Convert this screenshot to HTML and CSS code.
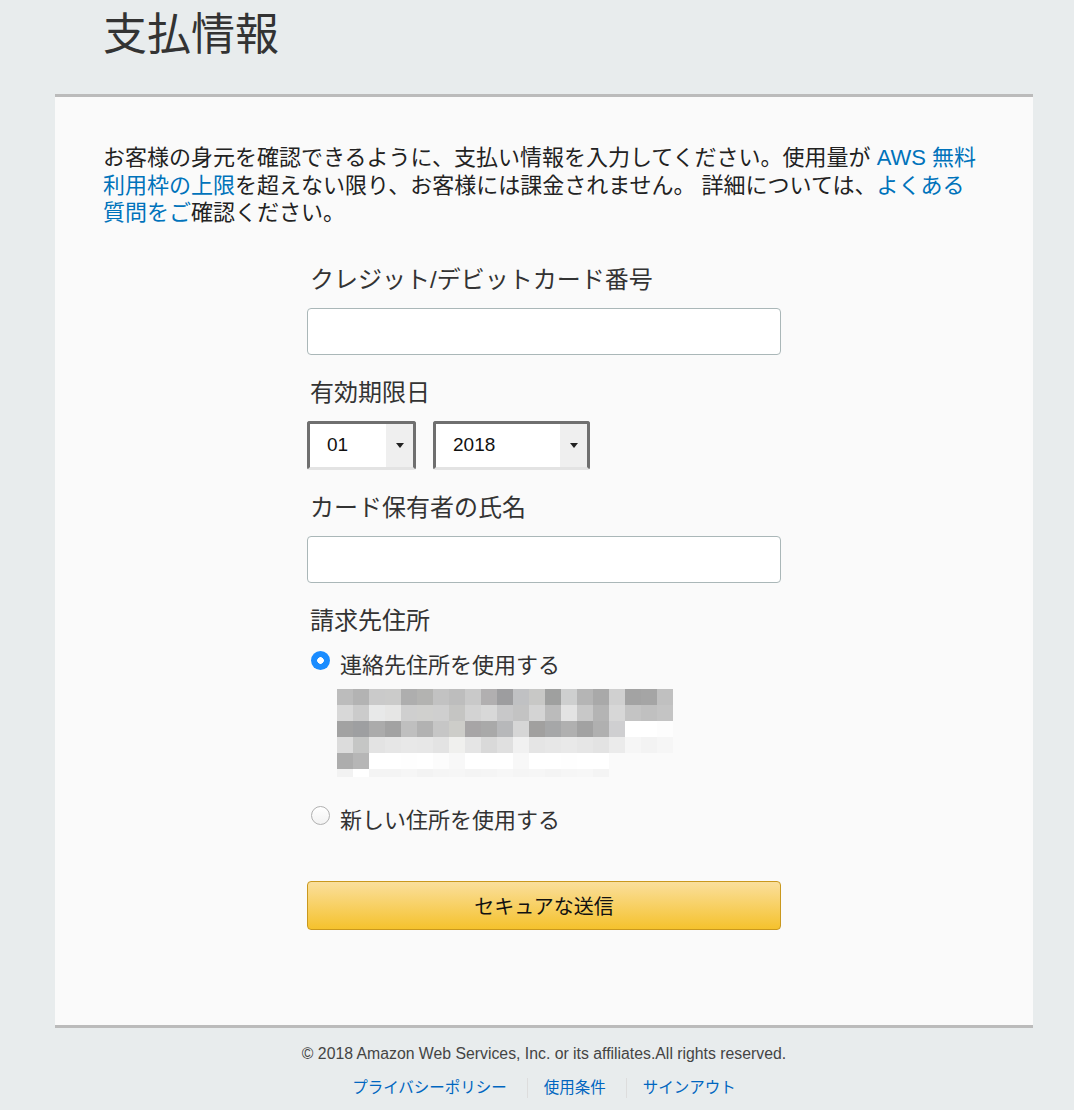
FILE: index.html
```html
<!DOCTYPE html>
<html lang="ja">
<head>
<meta charset="utf-8">
<title>支払情報</title>
<link rel="stylesheet" href="styles.css">
</head>
<body>
<div class="page">
  <header class="head">
    <h1 class="title">支払情報</h1>
  </header>
  <main class="card">
    <p class="intro"><span>お客様の身元を確認できるように、支払い情報を入力してください。使用量が </span><a href="#">AWS 無料</a><a href="#">利用枠の上限</a><span>を超えない限り、お客様には課金されません。 詳細については、</span><a href="#">よくある</a><a href="#">質問をご</a><span>確認ください。</span></p>
    <form class="form">
      <div class="field">
        <label class="label">クレジット/デビットカード番号</label>
        <div class="input"></div>
      </div>
      <div class="field">
        <label class="label">有効期限日</label>
        <div class="selects">
          <div class="select sel-month"><span class="sel-value">01</span><span class="sel-arrow"><span class="tri"></span></span></div>
          <div class="select sel-year"><span class="sel-value">2018</span><span class="sel-arrow"><span class="tri"></span></span></div>
        </div>
      </div>
      <div class="field">
        <label class="label">カード保有者の氏名</label>
        <div class="input"></div>
      </div>
      <div class="field">
        <label class="label">請求先住所</label>
        <div class="radio-row"><span class="radio checked"></span><span class="radio-text">連絡先住所を使用する</span></div>
        <div class="pixels">
          <div class="prow"><span style="background:#bcbcbc"></span><span style="background:#b3b3b3"></span><span style="background:#cacaca"></span><span style="background:#cbcbca"></span><span style="background:#aeaeae"></span><span style="background:#b3b3b1"></span><span style="background:#c2c2c2"></span><span style="background:#bdbdbd"></span><span style="background:#c9c9c9"></span><span style="background:#b1afb0"></span><span style="background:#9d9d9f"></span><span style="background:#c0c1c3"></span><span style="background:#c8c8c6"></span><span style="background:#9fa09f"></span><span style="background:#cecfcf"></span><span style="background:#b5b5b5"></span><span style="background:#a9a9a9"></span><span style="background:#d0d0d0"></span><span style="background:#a3a3a3"></span><span style="background:#a5a5a5"></span><span style="background:#c0c0c0"></span></div>
          <div class="prow"><span style="background:#d8d8d8"></span><span style="background:#cbcbcb"></span><span style="background:#e8e9e9"></span><span style="background:#e6e6e5"></span><span style="background:#cfcfcf"></span><span style="background:#d0d0ce"></span><span style="background:#cfcfcf"></span><span style="background:#c5c5c3"></span><span style="background:#d3d3d3"></span><span style="background:#d8d8d8"></span><span style="background:#c8c8c9"></span><span style="background:#c3c3c3"></span><span style="background:#d4d4d4"></span><span style="background:#bbbbbb"></span><span style="background:#e3e3e3"></span><span style="background:#c8c8c8"></span><span style="background:#b4b4b4"></span><span style="background:#d7d7d7"></span><span style="background:#c4c4c4"></span><span style="background:#c0c0c0"></span><span style="background:#c4c4c4"></span></div>
          <div class="prow"><span style="background:#a2a2a2"></span><span style="background:#9e9fa1"></span><span style="background:#ababab"></span><span style="background:#a2a2a2"></span><span style="background:#bfbfbf"></span><span style="background:#b2b2b2"></span><span style="background:#c6c6c6"></span><span style="background:#cdcdc9"></span><span style="background:#a7a5a6"></span><span style="background:#a9a9a9"></span><span style="background:#b7b8ba"></span><span style="background:#d6d6d6"></span><span style="background:#a1a09f"></span><span style="background:#a6a7a8"></span><span style="background:#b0b0b0"></span><span style="background:#a2a2a2"></span><span style="background:#b0b0b0"></span><span style="background:#cfcfd1"></span><span style="background:#ffffff"></span><span style="background:#ffffff"></span><span style="background:#fdfdfd"></span></div>
          <div class="prow"><span style="background:#dcdcdc"></span><span style="background:#c5c6c5"></span><span style="background:#e3e3e3"></span><span style="background:#e6e6e6"></span><span style="background:#e8e8e8"></span><span style="background:#e7e7e7"></span><span style="background:#e3e3e3"></span><span style="background:#f0f0ee"></span><span style="background:#e5e5e5"></span><span style="background:#d9d9d9"></span><span style="background:#e0e0e0"></span><span style="background:#f1f1f1"></span><span style="background:#e5e5e5"></span><span style="background:#e7e7e7"></span><span style="background:#e9e9e9"></span><span style="background:#e6e6e6"></span><span style="background:#e3e3e3"></span><span style="background:#ebebeb"></span><span style="background:#f6f6f6"></span><span style="background:#f3f3f3"></span><span style="background:#f6f6f6"></span></div>
          <div class="prow"><span style="background:#adadad"></span><span style="background:#b6b6b6"></span><span style="background:#ffffff"></span><span style="background:#ffffff"></span><span style="background:#fefefe"></span><span style="background:#ffffff"></span><span style="background:#fcfcfc"></span><span style="background:#f8f8f8"></span><span style="background:#ffffff"></span><span style="background:#ffffff"></span><span style="background:#ffffff"></span><span style="background:#f8f8f8"></span><span style="background:#ffffff"></span><span style="background:#ffffff"></span><span style="background:#fefefe"></span><span style="background:#ffffff"></span><span style="background:#ffffff"></span><span style="background:#fafafa"></span><span style="background:#fafafa"></span><span style="background:#fafafa"></span><span style="background:#fafafa"></span></div>
          <div class="prow half"><span style="background:#f2f2f2"></span><span style="background:#ffffff"></span><span style="background:#f4f4f4"></span><span style="background:#f4f4f4"></span><span style="background:#f6f6f6"></span><span style="background:#f3f3f3"></span><span style="background:#f5f5f5"></span><span style="background:#f6f6f6"></span><span style="background:#f4f4f4"></span><span style="background:#f5f5f5"></span><span style="background:#f7f7f7"></span><span style="background:#f5f5f5"></span><span style="background:#f6f6f6"></span><span style="background:#f4f4f4"></span><span style="background:#f6f6f6"></span><span style="background:#f7f7f7"></span><span style="background:#f4f4f4"></span><span style="background:#fafafa"></span><span style="background:#fafafa"></span><span style="background:#fafafa"></span><span style="background:#fafafa"></span></div>
        </div>
        <div class="radio-row second"><span class="radio"></span><span class="radio-text">新しい住所を使用する</span></div>
      </div>
      <button type="button" class="submit">セキュアな送信</button>
    </form>
  </main>
  <footer class="foot">
    <p class="copy">© 2018 Amazon Web Services, Inc. or its affiliates.All rights reserved.</p>
    <nav class="links">
      <a href="#">プライバシーポリシー</a>
      <a href="#">使用条件</a>
      <a href="#">サインアウト</a>
    </nav>
  </footer>
</div>
</body>
</html>
```

FILE: styles.css
```css
* { box-sizing: border-box; }
html, body { margin: 0; padding: 0; }
body {
  background: #e8eced;
  color: #333;
  font-family: "Liberation Sans", "Noto Sans CJK JP", sans-serif;
}
.page {
  width: 978px;
  margin-left: 55px;
}
.head {
  height: 94px;
  padding: 10px 0 0 48px;
}
.title {
  margin: 0;
  font-size: 44px;
  line-height: 50px;
  font-weight: normal;
  color: #333;
}
.card {
  background: #fafafa;
  border-top: 3px solid #bbbbbb;
  border-bottom: 3px solid #bbbbbb;
  padding: 47px 48px 95px;
}
.intro {
  margin: 0;
  font-size: 22px;
  line-height: 27.5px;
  color: #222;
}
.intro a { color: #0073bb; text-decoration: none; }
.form {
  width: 474px;
  margin: 38px auto 0;
  display: flex;
  flex-direction: column;
  gap: 23px;
}
.field {
  display: flex;
  flex-direction: column;
}
.label {
  font-size: 24px;
  line-height: 30px;
  padding-left: 3px;
  margin-bottom: 13px;
  color: #333;
}
.input {
  height: 47px;
  background: #fff;
  border: 1px solid #aab7b8;
  border-radius: 4px;
}
.selects {
  display: flex;
  gap: 17px;
}
.select {
  height: 49px;
  display: flex;
  background: #fff;
  border-style: solid;
  border-width: 3px;
  border-color: #6f6f6f #6f6f6f #e3e3e3 #6f6f6f;
  border-radius: 3px;
  font-family: "Liberation Sans", sans-serif;
  font-size: 19px;
  color: #111;
}
.sel-month { width: 109px; }
.sel-year { width: 157px; }
.sel-value {
  flex: 1;
  display: flex;
  align-items: center;
  padding-left: 17px;
}
.sel-arrow {
  width: 27px;
  background: #efefef;
  display: flex;
  align-items: center;
  justify-content: center;
}
.tri {
  width: 0;
  height: 0;
  border-left: 4px solid transparent;
  border-right: 4px solid transparent;
  border-top: 5px solid #222;
}
.radio-row {
  display: flex;
  align-items: center;
  height: 28px;
}
.radio {
  width: 19px;
  height: 19px;
  margin-left: 4px;
  margin-right: 10px;
  margin-top: -5px;
  border-radius: 50%;
  background: linear-gradient(#ffffff, #f2f2f2);
  border: 1px solid #b0b0b0;
  flex: none;
}
.radio.checked {
  border: none;
  background: radial-gradient(circle, #ffffff 0 3px, #1a8cff 3.6px);
}
.radio-text {
  font-size: 22px;
  color: #333;
}
.pixels {
  margin: 12px 0 0 30px;
  display: flex;
  flex-direction: column;
}
.prow {
  display: flex;
  height: 16px;
}
.prow span { width: 16px; height: 100%; }
.prow.half { height: 8px; }
.radio-row.second { margin-top: 27px; }
.submit {
  margin-top: 26px;
  height: 49px;
  width: 100%;
  border: 1px solid #c9981e;
  border-radius: 4px;
  background: linear-gradient(#fadf9c, #f5c22d);
  font-family: "Liberation Sans", "Noto Sans CJK JP", sans-serif;
  font-size: 20px;
  color: #111;
  padding: 0;
  cursor: pointer;
}
.foot {
  padding-top: 16px;
  text-align: center;
}
.copy {
  margin: 0;
  font-size: 15.8px;
  line-height: 20px;
  color: #444;
}
.links {
  margin-top: 14px;
  display: flex;
  justify-content: center;
}
.links a {
  font-size: 15.5px;
  line-height: 20px;
  color: #0066c0;
  text-decoration: none;
  padding: 0 20px 0 16px;
  border-left: 1px solid #dddddd;
}
.links a:first-child { border-left: none; padding-left: 0; }
.links a:last-child { padding-right: 0; }
```
